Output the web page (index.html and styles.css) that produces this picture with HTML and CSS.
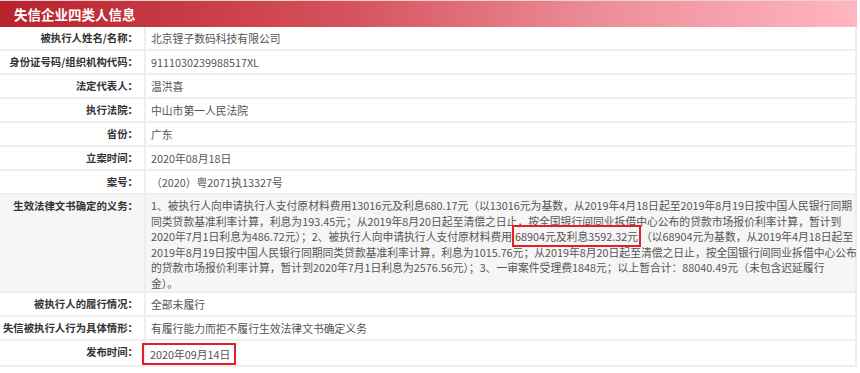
FILE: index.html
```html
<!DOCTYPE html>
<html lang="zh-CN">
<head>
<meta charset="utf-8">
<title>失信企业四类人信息</title>
<link rel="stylesheet" href="styles.css">
</head>
<body>
<div class="panel">
  <div class="panel-head">失信企业四类人信息</div>
  <div class="table">
    <div class="row"><div class="label">被执行人姓名/名称：</div><div class="value">北京锂子数码科技有限公司</div></div>
    <div class="row"><div class="label">身份证号码/组织机构代码：</div><div class="value">9111030239988517XL</div></div>
    <div class="row"><div class="label">法定代表人：</div><div class="value">温洪喜</div></div>
    <div class="row"><div class="label">执行法院：</div><div class="value">中山市第一人民法院</div></div>
    <div class="row"><div class="label">省份：</div><div class="value">广东</div></div>
    <div class="row"><div class="label">立案时间：</div><div class="value">2020年08月18日</div></div>
    <div class="row"><div class="label">案号：</div><div class="value">（2020）粤2071执13327号</div></div>
    <div class="row row-long"><div class="label">生效法律文书确定的义务：</div><div class="value value-long">1、被执行人向申请执行人支付原材料费用13016元及利息680.17元（以13016元为基数，从2019年4月18日起至2019年8月19日按中国人民银行同期<br>同类贷款基准利率计算，利息为193.45元；从2019年8月20日起至清偿之日止，按全国银行间同业拆借中心公布的贷款市场报价利率计算，暂计到<br>2020年7月1日利息为486.72元）；2、被执行人向申请执行人支付原材料费用<span class="mark">68904元及利息3592.32元</span>（以68904元为基数，从2019年4月18日起至<br>2019年8月19日按中国人民银行同期同类贷款基准利率计算，利息为1015.76元；从2019年8月20日起至清偿之日止，按全国银行间同业拆借中心公布<br>的贷款市场报价利率计算，暂计到2020年7月1日利息为2576.56元）；3、一审案件受理费1848元；以上暂合计：88040.49元（未包含迟延履行<br>金）。</div></div>
    <div class="row"><div class="label">被执行人的履行情况：</div><div class="value">全部未履行</div></div>
    <div class="row"><div class="label">失信被执行人行为具体情形：</div><div class="value">有履行能力而拒不履行生效法律文书确定义务</div></div>
    <div class="row"><div class="label">发布时间：</div><div class="value"><span class="mark-box">2020年09月14日</span></div></div>
  </div>
</div>
</body>
</html>
```
FILE: styles.css
```css
html, body {
  margin: 0;
  padding: 0;
  background: #fff;
}
body {
  font-family: "Noto Sans CJK SC", "Microsoft YaHei", sans-serif;
  font-size: 10.8px;
  color: #555;
}
.panel {
  width: 857px;
}
.panel-head {
  height: 27px;
  line-height: 27px;
  padding-left: 14px;
  color: #fff;
  font-size: 13.5px;
  font-weight: bold;
  background: linear-gradient(to right, #b8222b 0%, #d5515b 40%, #ec8e98 70%, #ffb6c1 100%);
  border-top: 1px solid #f3d0d3;
  box-sizing: border-box;
}
.table {
  border-right: 2px solid #eeeeee;
}
.row {
  display: grid;
  grid-template-columns: 146px 1fr;
  border-bottom: 2px solid #eeeeee;
}
.label {
  text-align: right;
  font-weight: bold;
  font-size: 10.4px;
  color: #333;
  padding: 0 6px 0 0;
  line-height: 22px;
  border-right: 2px solid #eeeeee;
  white-space: nowrap;
}
.value {
  padding-left: 5px;
  line-height: 22px;
  white-space: nowrap;
}
.row-long {
  background: #f6f6f6;
}
.row-long .label {
  padding-top: 3px;
  line-height: 15.5px;
}
.value-long {
  padding-top: 3px;
  padding-bottom: 0;
  line-height: 15.5px;
}
.mark {
  border: 2px solid #e3202a;
  padding: 1px 1px;
}
.mark-box {
  display: inline-block;
  border: 2px solid #e3202a;
  line-height: 18px;
  padding: 0 4px 0 6px;
  margin-left: -9px;
  vertical-align: middle;
}
```
